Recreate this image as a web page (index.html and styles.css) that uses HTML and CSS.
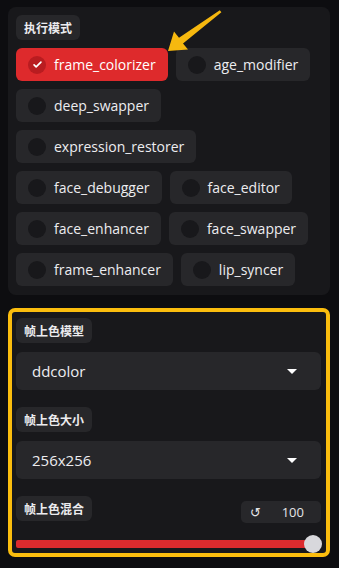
FILE: index.html
```html
<!DOCTYPE html>
<html lang="zh">

<head>
  <meta charset="UTF-8" />
  <meta name="viewport" content="width=device-width, initial-scale=1.0" />
  <title>处理器</title>
  <link rel="stylesheet" href="styles.css">
</head>

<body>

  <div class="panel">
    <span class="label">执行模式</span>
    <div class="chips">
      <label class="chip checked"><span class="dot"><svg viewBox="0 0 16 16" width="11" height="11"><path d="M3 8.5l3 3 7-7" fill="none" stroke="#fff" stroke-width="2.4" stroke-linecap="round" stroke-linejoin="round"/></svg></span>frame_colorizer</label>
      <label class="chip"><span class="dot"></span>age_modifier</label>
      <label class="chip"><span class="dot"></span>deep_swapper</label>
      <label class="chip"><span class="dot"></span>expression_restorer</label>
      <label class="chip"><span class="dot"></span>face_debugger</label>
      <label class="chip"><span class="dot"></span>face_editor</label>
      <label class="chip"><span class="dot"></span>face_enhancer</label>
      <label class="chip"><span class="dot"></span>face_swapper</label>
      <label class="chip"><span class="dot"></span>frame_enhancer</label>
      <label class="chip"><span class="dot"></span>lip_syncer</label>
    </div>
  </div>

  <div class="group">
    <div class="field">
      <span class="label">帧上色模型</span>
      <div class="select">ddcolor<span class="caret"></span></div>
    </div>
    <div class="field">
      <span class="label">帧上色大小</span>
      <div class="select">256x256<span class="caret"></span></div>
    </div>
    <div class="field">
      <div class="slider-head">
        <span class="label">帧上色混合</span>
        <div class="number"><span class="reset">↺</span><span>100</span></div>
      </div>
      <div class="track"><span class="thumb"></span></div>
    </div>
  </div>

  <!-- flèche d'annotation -->
  <svg class="arrow" width="339" height="80" viewBox="0 0 339 80">
    <polygon points="219.8,10.3 221.4,12.2 183,43.5 188,49.5 168,51 174,31.5 179,37.8" fill="#f6b80f"/>
  </svg>

</body>

</html>
```

FILE: styles.css
```css
body {
  margin: 0;
  padding: 7px 9px 0 8px;
  background: #0d0d10;
  font-family: "Open Sans", "Noto Sans CJK SC", sans-serif;
  color: #e4e4e7;
  position: relative;
}

.panel {
  background: #18181b;
  border-radius: 8px;
  padding: 8px 8px 9px;
}

.label {
  display: inline-block;
  background: #27272a;
  color: #ececef;
  font-family: "Noto Sans CJK SC", sans-serif;
  font-weight: bold;
  font-size: 12px;
  line-height: 25px;
  height: 25px;
  padding: 0 8px;
  border-radius: 6px;
}

.chips {
  display: flex;
  flex-wrap: wrap;
  gap: 8px;
  margin-top: 8px;
}

.chip {
  display: flex;
  align-items: center;
  gap: 8px;
  height: 33px;
  padding: 0 12px 0 12px;
  background: #27272a;
  border-radius: 6px;
  font-size: 14px;
  color: #ededf0;
}

.dot {
  width: 18px;
  height: 18px;
  border-radius: 50%;
  background: #18181b;
  display: flex;
  align-items: center;
  justify-content: center;
}

.chip.checked {
  background: #de2a2c;
  color: #fff;
}

.chip.checked .dot {
  background: #b91c20;
}

.group {
  margin-top: 13px;
  border: 4px solid #fbbd0e;
  border-radius: 7px;
  background: #18181b;
  padding: 6px 5px 5px 4px;
  display: flex;
  flex-direction: column;
  gap: 17px;
}

.field {
  display: flex;
  flex-direction: column;
  gap: 9px;
}

.field .label {
  align-self: flex-start;
}

.select {
  height: 38px;
  background: #27272a;
  border-radius: 6px;
  padding: 0 16px;
  display: flex;
  align-items: center;
  justify-content: space-between;
  font-size: 15px;
  color: #ededf0;
}

.caret {
  width: 0;
  height: 0;
  border-left: 5px solid transparent;
  border-right: 5px solid transparent;
  border-top: 5px solid #fff;
  margin-right: 8px;
}

.slider-head {
  display: flex;
  justify-content: space-between;
  align-items: flex-start;
}

.number {
  margin-top: 5px;
  width: 80px;
  height: 22px;
  background: #27272a;
  border-radius: 5px;
  display: flex;
  align-items: center;
  justify-content: space-between;
  padding: 0 17px 0 9px;
  box-sizing: border-box;
  font-size: 13px;
}

.reset {
  font-size: 13px;
  font-family: "DejaVu Sans", sans-serif;
}

.track {
  position: relative;
  height: 8px;
  margin: 8px 0 0;
  background: #dc2b2e;
  border-radius: 2px;
}

.thumb {
  position: absolute;
  right: -1px;
  top: -5px;
  width: 18px;
  height: 18px;
  border-radius: 50%;
  background: #d8d8dc;
}

.arrow {
  position: absolute;
  left: 0;
  top: 0;
  pointer-events: none;
}
```
